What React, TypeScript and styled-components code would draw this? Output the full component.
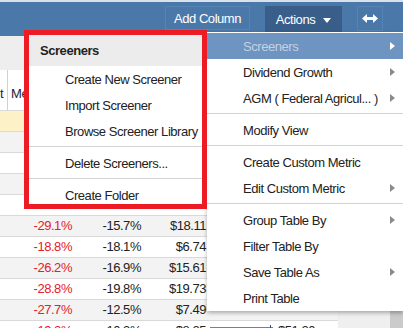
import styled, { createGlobalStyle } from 'styled-components'

const GlobalStyle = createGlobalStyle`
  html, body {
    margin: 0;
    padding: 0;
    overflow: hidden;
  }
  body {
    font-family: "Liberation Sans", Arial, sans-serif;
    font-size: 13px;
    letter-spacing: -0.45px;
  }
`

const Page = styled.div`
  position: relative;
  width: 403px;
  height: 328px;
  overflow: hidden;
  background: #efefef;
`

/* 상단 툴바 */
const Toolbar = styled.div`
  height: 30px;
  border-top: 2px solid #d9e2ec;
  background: #4a78a9;
  display: flex;
  justify-content: flex-end;
  align-items: flex-start;
  gap: 15px;
  padding: 4px 20px 0 0;
  box-sizing: content-box;
`

const ToolButton = styled.div<{ $dark?: boolean; $h: number; $w: number }>`
  width: ${p => p.$w}px;
  height: ${p => p.$h}px;
  box-sizing: border-box;
  display: flex;
  align-items: center;
  justify-content: center;
  gap: 8px;
  color: #fff;
  font-size: 13px;
  background: ${p => (p.$dark ? '#395e8a' : 'transparent')};
  border: 1px solid ${p => (p.$dark ? '#395e8a' : '#5583b3')};
  border-bottom: ${p => (p.$dark ? 'none' : '1px solid #5583b3')};
`

const Caret = styled.span`
  width: 0;
  height: 0;
  border-left: 4.5px solid transparent;
  border-right: 4.5px solid transparent;
  border-top: 5px solid #fff;
  margin-top: 2px;
`

const HeaderStrip = styled.div`
  height: 34px;
  background: #eeeeee;
`

const TableWrap = styled.div`
  display: flex;
`

const Table = styled.div`
  width: 338px;
  background: #fff;
`

const Scrollbar = styled.div`
  margin-left: auto;
  width: 13px;
  background: #cbcbcb;
`

const Row = styled.div<{ $bg?: string; $h?: number }>`
  display: grid;
  grid-template-columns: 8px 68px 69px 65px 65px 63px;
  height: ${p => p.$h ?? 20}px;
  background: ${p => p.$bg ?? '#fff'};
  border-bottom: 1px solid #d9d9d9;
`

const HeadCell = styled.div<{ $line?: boolean }>`
  display: flex;
  align-items: flex-end;
  padding: 0 0 9px 3px;
  overflow: hidden;
  white-space: nowrap;
  color: #1d1d3a;
  border-right: ${p => (p.$line ? '1px solid #d0d0d0' : 'none')};
  margin-left: ${p => (p.$line ? '-3px' : '0')};
`

const Cell = styled.div<{ $red?: boolean; $left?: boolean }>`
  line-height: 20px;
  padding: 0 4px 0 3px;
  text-align: ${p => (p.$left ? 'left' : 'right')};
  color: ${p => (p.$red ? '#e3202b' : '#222')};
  white-space: nowrap;
  overflow: hidden;
`

const BarCell = styled.div`
  display: flex;
  align-items: center;
`

const Bar = styled.div`
  position: relative;
  width: 63px;
  height: 9px;
  box-sizing: border-box;
  border: 1px solid #5c86b6;
  background: #dfe9f5;

  &::after {
    content: '';
    position: absolute;
    right: 1px;
    top: -3px;
    width: 1px;
    height: 11px;
    background: #2c4f7c;
  }
`

/* 드롭다운 메뉴 */
const MainMenu = styled.div`
  position: absolute;
  left: 207px;
  top: 32px;
  width: 196px;
  padding-top: 1px;
  background: #fff;
  box-shadow: 0 2px 4px rgba(0, 0, 0, 0.3);
  z-index: 10;
`

const MenuItem = styled.div<{ $active?: boolean }>`
  height: 26px;
  display: flex;
  align-items: center;
  justify-content: space-between;
  padding: 0 8px 0 36px;
  color: ${p => (p.$active ? '#c3d1e2' : '#222')};
  background: ${p => (p.$active ? '#6e95c1' : 'transparent')};
  white-space: nowrap;
`

const Arrow = styled.span<{ $light?: boolean }>`
  width: 0;
  height: 0;
  border-top: 4.5px solid transparent;
  border-bottom: 4.5px solid transparent;
  border-left: 5px solid ${p => (p.$light ? '#fff' : '#8b8b8b')};
`

const Separator = styled.div`
  height: 1px;
  background: #d3d3d3;
  margin: 2px 0 3px;
`

const SubMenu = styled.div`
  position: absolute;
  left: 24px;
  top: 30px;
  width: 183px;
  height: 179px;
  box-sizing: border-box;
  border: 5px solid #ed1c24;
  background: #fff;
  overflow: hidden;
  z-index: 20;
`

const SubHeader = styled.div`
  height: 31px;
  display: flex;
  align-items: center;
  padding-left: 11px;
  background: #ececec;
  font-weight: bold;
  color: #222;
`

const SubItem = styled.div`
  height: 26px;
  display: flex;
  align-items: center;
  padding-left: 36px;
  color: #222;
  white-space: nowrap;
`

const rows = [
  ['-29.1%', '-15.7%', '$18.11'],
  ['-18.8%', '-18.1%', '$6.74'],
  ['-26.2%', '-16.9%', '$15.61'],
  ['-28.8%', '-19.8%', '$19.73'],
  ['-27.7%', '-12.5%', '$7.49'],
  ['-19.2%', '-10.3%', '$8.25'],
]

function SwapIcon() {
  return (
    <svg width="16" height="9" viewBox="0 0 16 9">
      <polygon points="0,4.5 5,0 5,9" fill="#fff" />
      <polygon points="16,4.5 11,0 11,9" fill="#fff" />
      <rect x="4" y="3" width="8" height="3" fill="#fff" />
    </svg>
  )
}

export default function App() {
  return (
    <Page>
      <GlobalStyle />
      <Toolbar>
        <ToolButton $w={85} $h={24}>Add Column</ToolButton>
        <ToolButton $w={77} $h={26} $dark>
          Actions <Caret />
        </ToolButton>
        <ToolButton $w={26} $h={25}>
          <SwapIcon />
        </ToolButton>
      </Toolbar>
      <HeaderStrip />
      <TableWrap>
        <Table>
          <Row $h={40}>
            <HeadCell $line>t</HeadCell>
            <HeadCell>Me</HeadCell>
          </Row>
          <Row $bg="#fdf2c7" />
          {[0, 1, 2, 3].map(i => (
            <Row key={i} $bg={i % 2 === 0 ? '#f3f3f3' : '#fff'} />
          ))}
          {rows.map((r, i) => (
            <Row key={r[0]} $bg={i % 2 === 0 ? '#f3f3f3' : '#fff'}>
              <Cell />
              <Cell $red>{r[0]}</Cell>
              <Cell>{r[1]}</Cell>
              <Cell>{r[2]}</Cell>
              {i === 5 ? (
                <>
                  <BarCell>
                    <Bar />
                  </BarCell>
                  <Cell $left>$51.20</Cell>
                </>
              ) : null}
            </Row>
          ))}
        </Table>
        <Scrollbar />
      </TableWrap>

      <MainMenu>
        <MenuItem $active>
          Screeners <Arrow $light />
        </MenuItem>
        <MenuItem>
          Dividend Growth <Arrow />
        </MenuItem>
        <MenuItem>
          AGM ( Federal Agricul... ) <Arrow />
        </MenuItem>
        <Separator />
        <MenuItem>Modify View</MenuItem>
        <Separator />
        <MenuItem>Create Custom Metric</MenuItem>
        <MenuItem>
          Edit Custom Metric <Arrow />
        </MenuItem>
        <Separator />
        <MenuItem>
          Group Table By <Arrow />
        </MenuItem>
        <MenuItem>Filter Table By</MenuItem>
        <MenuItem>
          Save Table As <Arrow />
        </MenuItem>
        <MenuItem>Print Table</MenuItem>
      </MainMenu>

      <SubMenu>
        <SubHeader>Screeners</SubHeader>
        <SubItem>Create New Screener</SubItem>
        <SubItem>Import Screener</SubItem>
        <SubItem>Browse Screener Library</SubItem>
        <Separator />
        <SubItem>Delete Screeners...</SubItem>
        <Separator />
        <SubItem>Create Folder</SubItem>
      </SubMenu>
    </Page>
  )
}
